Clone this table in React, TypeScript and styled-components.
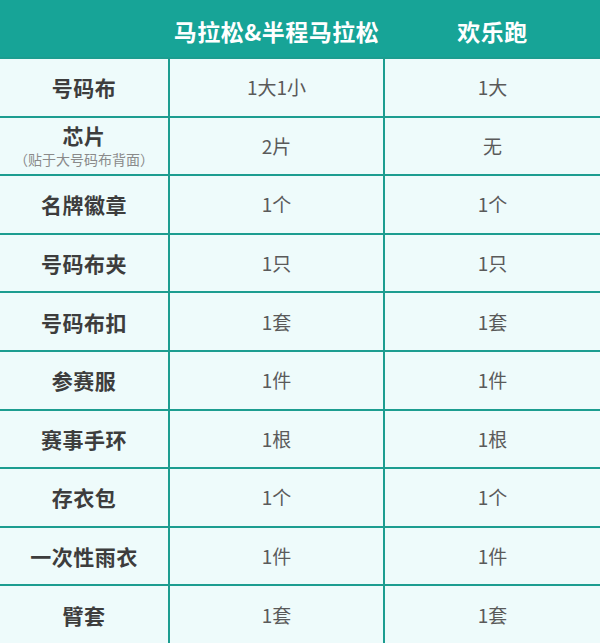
import React from 'react';
import styled, {createGlobalStyle} from 'styled-components';

const GlobalStyle = createGlobalStyle`
  html, body {
    margin: 0;
    padding: 0;
    background: #eefbfb;
  }
  body {
    font-family: "Noto Sans CJK SC", "Noto Sans", sans-serif;
  }
`

const LINE = '#1c9d90';
const COLUMNS = '168px 213px 215px';

const Table = styled.div`
  width: 600px;
  height: 643px;
  display: flex;
  flex-direction: column;
  background: ${LINE};
`

const HeaderRow = styled.div`
  display: grid;
  grid-template-columns: ${COLUMNS};
  column-gap: 2px;
  height: 57px;
  margin-bottom: 2px;
  background: #17a497;
`

const HeaderCell = styled.div`
  display: flex;
  align-items: center;
  justify-content: center;
  padding-top: 5px;
  font-size: 23px;
  font-weight: 700;
  color: #ffffff;
  letter-spacing: 0.5px;
`

const Body = styled.div`
  flex: 1;
  display: grid;
  grid-template-columns: ${COLUMNS};
  grid-auto-rows: 1fr;
  gap: 2px;
`

const Cell = styled.div`
  display: flex;
  flex-direction: column;
  align-items: center;
  justify-content: center;
  background: #eefbfb;
`

const Label = styled.span<{$withNote?: boolean}>`
  font-size: 21px;
  font-weight: 700;
  color: #3d3d3d;
  line-height: ${p => p.$withNote ? '22px' : '26px'};
  margin-bottom: ${p => p.$withNote ? '5px' : '0'};
  letter-spacing: 0.5px;
`

const Note = styled.span`
  font-size: 14px;
  color: #8a8a8a;
  line-height: 16px;
`

const Value = styled.span`
  font-size: 19px;
  color: #5a5a5a;
  line-height: 24px;
`

type Item = {
    name: string;
    note?: string;
    marathon: string;
    fun: string;
}

const items: Item[] = [
    {name: '号码布', marathon: '1大1小', fun: '1大'},
    {name: '芯片', note: '（贴于大号码布背面）', marathon: '2片', fun: '无'},
    {name: '名牌徽章', marathon: '1个', fun: '1个'},
    {name: '号码布夹', marathon: '1只', fun: '1只'},
    {name: '号码布扣', marathon: '1套', fun: '1套'},
    {name: '参赛服', marathon: '1件', fun: '1件'},
    {name: '赛事手环', marathon: '1根', fun: '1根'},
    {name: '存衣包', marathon: '1个', fun: '1个'},
    {name: '一次性雨衣', marathon: '1件', fun: '1件'},
    {name: '臂套', marathon: '1套', fun: '1套'},
];

const App = () => {
    return (
        <>
            <GlobalStyle/>
            <Table>
                <HeaderRow>
                    <HeaderCell/>
                    <HeaderCell>马拉松&amp;半程马拉松</HeaderCell>
                    <HeaderCell>欢乐跑</HeaderCell>
                </HeaderRow>
                <Body>
                    {items.map(item => (
                        <React.Fragment key={item.name}>
                            <Cell>
                                <Label $withNote={!!item.note}>{item.name}</Label>
                                {item.note && <Note>{item.note}</Note>}
                            </Cell>
                            <Cell><Value>{item.marathon}</Value></Cell>
                            <Cell><Value>{item.fun}</Value></Cell>
                        </React.Fragment>
                    ))}
                </Body>
            </Table>
        </>
    );
};

export default App;
